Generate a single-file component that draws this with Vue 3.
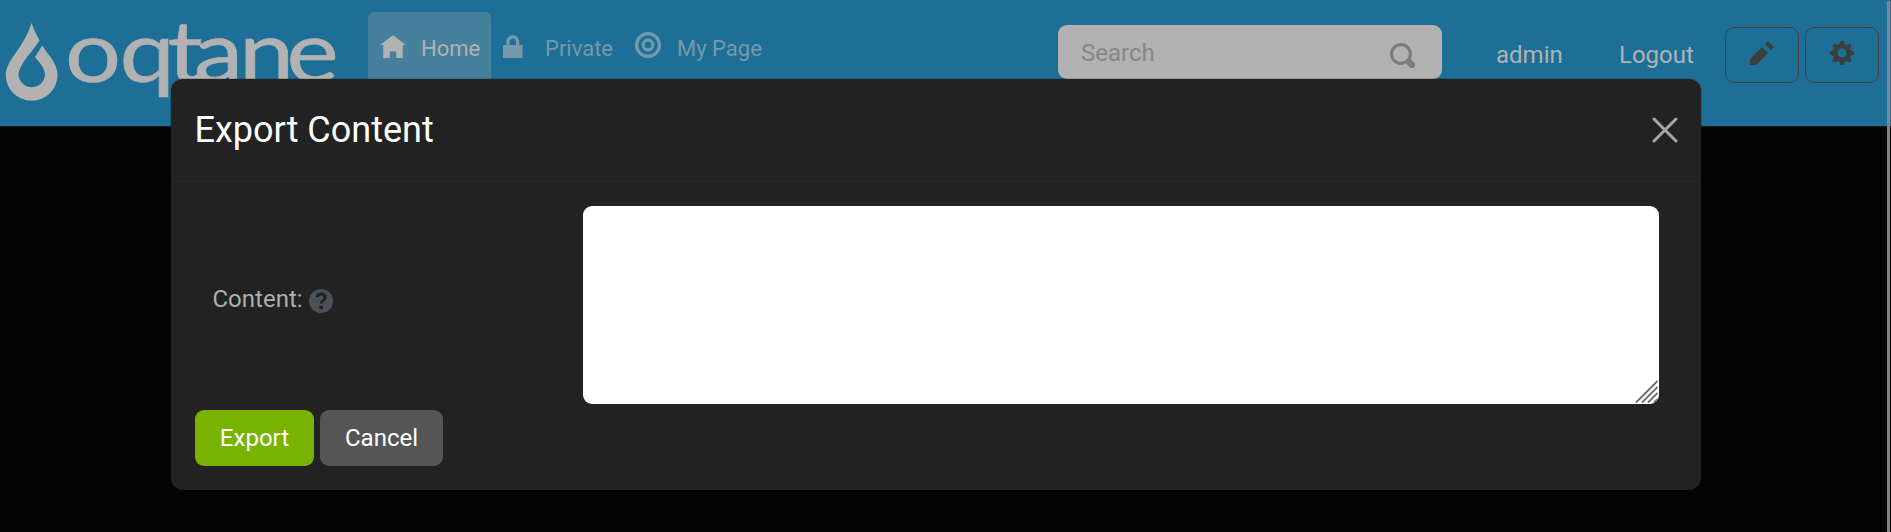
<script setup>
const nav = [
  { label: 'Home', kind: 'home', d: 'M4 1l-4 3h1v4h2v-2h2v2h2v-4h1z' },
  { label: 'Private', kind: 'private', d: 'M3 1c-1.1 0-2 .9-2 2v1h-1v4h6v-4h-1v-1c0-1.1-.9-2-2-2zm0 1c.56 0 1 .44 1 1v1h-2v-1c0-.56.44-1 1-1z' },
  { label: 'My Page', kind: 'mypage', d: 'M4 0a4 4 0 1 0 0 8a4 4 0 1 0 0-8zm0 1a3 3 0 1 1 0 6a3 3 0 1 1 0-6zm0 1a2 2 0 1 0 0 4a2 2 0 1 0 0-4zm0 1a1 1 0 1 1 0 2a1 1 0 1 1 0-2z' },
]
// Left edge of each wordmark letter, before the horizontal stretch
const letterX = [65, 119.5, 167.5, 194, 239, 286.5].map(x => (x / 1.15).toFixed(1)).join(' ')
</script>

<template>
  <div class="page">
    <header class="bar">
      <svg class="logo" width="350" height="126" viewBox="0 0 350 126">
        <path d="M31.500 23C34 30 37 36 39.500 40.500C33 51 19 64 18.500 75A13.300 13.300 0 0 0 45 75C45 68 39 62 35 57L42.300 45.500C48 55 57.500 63 57.500 75A25.800 25.800 0 0 1 5.800 75C5.800 60 24 48 31.500 23z" />
        <text class="wordmark" transform="scale(1.15 1)" :x="letterX" y="81.500">oqtane</text>
      </svg>
      <nav class="menu">
        <a v-for="n in nav" :key="n.kind" class="item" :class="n.kind">
          <svg class="nav-icon" viewBox="0 0 8 8"><path :d="n.d" fill-rule="evenodd" /></svg>
          <span>{{ n.label }}</span>
        </a>
      </nav>
      <div class="search">
        <span>Search</span>
        <svg width="25" height="25" viewBox="0 0 8 8"><path fill-rule="evenodd" d="M3.5 0c-1.93 0-3.5 1.57-3.5 3.5s1.57 3.5 3.5 3.5c.59 0 1.17-.14 1.66-.41a1 1 0 0 0 .13.13l1 1a1.02 1.02 0 1 0 1.44-1.44l-1-1a1 1 0 0 0-.16-.13c.27-.49.44-1.06.44-1.66 0-1.93-1.55-3.5-3.5-3.5zm0 1c1.39 0 2.5 1.11 2.5 2.5 0 .66-.24 1.27-.66 1.72l-.03.03a1 1 0 0 0-.13.13c-.44.4-1.04.63-1.69.63-1.39 0-2.5-1.11-2.5-2.5s1.11-2.5 2.5-2.5z" /></svg>
      </div>
      <a class="user">admin</a>
      <a class="user logout">Logout</a>
      <div class="tools">
        <button class="tool"><svg width="24" height="24" viewBox="0 0 8 8"><path d="M6 0l-1 1 2 2 1-1-2-2zm-2 2l-4 4v2h2l4-4-2-2z" /></svg></button>
        <button class="tool"><svg width="24" height="24" viewBox="0 0 8 8"><path fill-rule="evenodd" d="M3.5 0l-.5 1.190c-.1.030-.190.080-.280.130l-1.190-.5-.720.720.5 1.190c-.050.1-.090.180-.130.280l-1.190.5v1l1.190.5c.040.1.080.180.130.280l-.5 1.190.720.720 1.190-.5c.090.040.180.090.280.130l.5 1.190h1l.5-1.190c.090-.040.190-.080.280-.130l1.190.5.720-.720-.5-1.190c.040-.090.090-.190.130-.280l1.190-.5v-1l-1.190-.5c-.030-.090-.080-.190-.130-.280l.5-1.190-.720-.720-1.190.5c-.090-.040-.190-.090-.280-.130l-.5-1.190h-1zm.5 2.500c.830 0 1.500.670 1.500 1.500s-.670 1.500-1.500 1.500-1.500-.670-1.500-1.500.670-1.500 1.500-1.500z" /></svg></button>
      </div>
    </header>

    <section class="modal">
      <div class="modal-head">
        <h5>Export Content</h5>
        <svg class="close" width="26" height="26" viewBox="0 0 26 26"><path d="M2 2L24 24M24 2L2 24" /></svg>
      </div>
      <div class="modal-body">
        <div class="row">
          <label>Content:
            <svg class="help" width="24" height="24" viewBox="0 0 24 24">
              <circle class="disc" cx="12" cy="12" r="12" />
              <path class="hook" d="M8 8.200C8.400 3.800 16.600 4 16.200 8.600C16 11.200 12.300 11.300 12.300 14.500" />
              <circle class="dot" cx="12.200" cy="18.500" r="2" />
            </svg>
          </label>
          <div class="area">
            <svg width="24" height="24" viewBox="0 0 24 24"><path d="M1.500 22L22 1.500M7.500 22L22 7.500M13.500 22L22 13.500M19.500 22L22 19.500" /></svg>
          </div>
        </div>
        <div class="actions">
          <button class="btn export">Export</button>
          <button class="btn cancel">Cancel</button>
        </div>
      </div>
    </section>
    <div class="scroll"></div>
  </div>
</template>

<style>
html, body { margin: 0; background: #040404; overflow: hidden; }
</style>

<style scoped>
.page { position: relative; width: 1891px; height: 532px; overflow: hidden; background: #040404; font: 24px/36px Roboto, sans-serif; box-sizing: border-box; }
.page * { box-sizing: border-box; }
.bar { display: flex; align-items: flex-start; height: 127px; background: #1e6f97; border-bottom: 1px solid #171717; color: #b2b2b2; }
.logo { flex: none; width: 350px; fill: #b2b2b2; }
.wordmark { font: 86px Lato, sans-serif; fill: #b2b2b2; stroke: #b2b2b2; stroke-width: .6; }
.menu { display: flex; width: 708px; padding: 12px 0 0 18px; color: #7499aa; }
.item { display: flex; height: 90px; padding-top: 18px; white-space: nowrap; font-size: 22px; }
.nav-icon { flex: none; width: 26px; height: 26px; margin-top: 2px; fill: currentColor; }
.item span { margin: 1px 0 0 15px; }
.home { width: 123px; padding-left: 12px; border-radius: 6px 6px 0 0; background: #46809c; color: #b2b2b2; }
.private { width: 144px; padding-left: 12px; }
.private span { margin-left: 16px; }
.mypage { padding-left: 0; }
.mypage span { margin-left: 16px; }
.search { display: flex; width: 384px; height: 54px; margin-top: 25px; padding: 10px 27px 0 23px; justify-content: space-between; border-radius: 9px; background: #b2b2b2; color: #858786; }
.search svg { margin-top: 8px; fill: #7c7c7c; }
.user { width: 123px; margin: 37px 0 0 54px; }
.logout { width: 106px; margin-left: 0; }
.tools { display: flex; gap: 6px; margin-top: 27px; }
.tool { display: flex; justify-content: center; width: 74px; height: 56px; padding: 13px 0 0; border: 1px solid #414141; border-radius: 9px; background: none; }
.tool svg { fill: #3d3d3d; }
.modal { position: absolute; left: 171px; top: 79px; width: 1530px; height: 411px; border-radius: 12px; background: #222; box-shadow: 0 0 0 1px rgba(0, 0, 0, .14); }
.modal-head { display: flex; justify-content: space-between; height: 103px; padding: 24px 23px 0 23.500px; border-bottom: 1px solid #282828; }
h5 { margin: 0; font-size: 36px; line-height: 54px; font-weight: 400; color: #fff; }
.close { margin-top: 14px; fill: none; stroke: #a7a7a7; stroke-width: 3; stroke-linecap: round; }
.modal-body { padding: 24px; }
.row { display: flex; align-items: center; height: 198px; }
label { display: flex; width: 388px; padding: 0 0 12px 17.500px; color: #adafae; }
.help { margin: 8px 0 0 6px; }
.disc { fill: #495057; }
.hook { fill: none; stroke: #222; stroke-width: 3; }
.dot { fill: #222; }
.area { display: flex; align-items: flex-end; justify-content: flex-end; width: 1076px; height: 198px; border-radius: 9px; background: #fff; overflow: hidden; }
.area svg { fill: none; stroke: #707070; stroke-width: 1.8; stroke-linecap: round; }
.actions { display: flex; gap: 6px; margin-top: 6px; }
.btn { height: 56px; padding: 0; border: 0; border-radius: 9px; color: #fff; font: 24px/36px Roboto, sans-serif; }
.export { width: 119px; background: #77b300; }
.cancel { width: 123px; background: #555; }
.scroll { position: absolute; left: 1887px; top: 1px; width: 3px; height: 531px; background: #848484; }
</style>
